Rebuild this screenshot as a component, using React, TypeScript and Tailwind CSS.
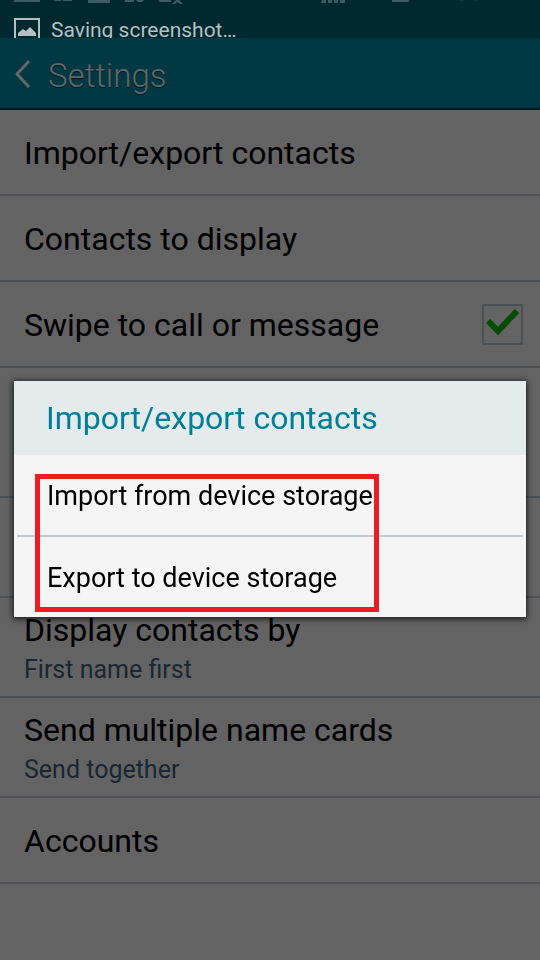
import type { ReactNode } from "react";

const font = "font-['Roboto','Noto_Sans',sans-serif]";

function StatusBar() {
  return (
    <div className="relative flex h-[38px] items-end overflow-hidden bg-[#00282f] pl-3.5">
      <svg
        className="absolute top-0 left-0 h-[4px] w-[540px]"
        viewBox="0 0 540 4"
        fill="#3f5a60"
        aria-hidden="true"
      >
        <path d="M14 0h26v2H14zM54 0h7v1h-7zM63 0h9v1h-9zM88 0h22v3H88zM125 0h9v2h-9zM136 0h8l-2 2h-4zM159 0h12v2h-12zM172 4l4-4h3l4 4h-3l-3-2-2 2z" />
        <path d="M322 0h4v3h-5zM328 0h4v3h-4zM334 0h4v3h-4zM340 0h5v3h-5zM392 0h17v2h-17z" />
        <path d="M460 0h3v1h-3zM474 0h3v1h-3z" opacity=".4" />
      </svg>
      <div className="flex h-5 items-start gap-[11px]">
        <svg className="h-5 w-[26px]" viewBox="0 0 26 20" aria-hidden="true">
          <path d="M1 24V1h24v23" fill="none" stroke="#b3c1c4" strokeWidth="2" />
          <path d="M4 18v-3l5-4 3 2 4-4 6 6v3z" fill="#b3c1c4" />
        </svg>
        <span className="text-[21px] leading-6 text-[#b3c1c4]">
          Saving screenshot…
        </span>
      </div>
    </div>
  );
}

function Header() {
  return (
    <header className="flex h-[72px] items-center gap-4 border-b-2 border-[#00171e] bg-[#003944] pl-3.5 text-[#666666]">
      <button type="button" aria-label="Back">
        <svg className="h-[30px] w-[18px]" viewBox="0 0 18 30" aria-hidden="true">
          <path d="M15 3 3 16l12 13" fill="none" stroke="#666666" strokeWidth="3" />
        </svg>
      </button>
      <h1 className="pt-1.5 text-[33px] leading-10 font-light [text-shadow:0_1px_1px_#00171e]">
        Settings
      </h1>
    </header>
  );
}

type RowProps = {
  title: string;
  summary?: string;
  children?: ReactNode;
};

function Row({ title, summary, children }: RowProps) {
  return (
    <li
      className={`flex items-center justify-between border-b-2 border-[#4b5055] pr-[17px] pl-6 ${
        summary ? "h-[100px]" : "h-[86px]"
      }`}
    >
      <button type="button" className="pt-0.5 text-left">
        <span className="block text-[32px] leading-11 text-black">{title}</span>
        {summary && (
          <span className="block text-[25px] leading-9 text-[#1a2631]">{summary}</span>
        )}
      </button>
      {children}
    </li>
  );
}

function SwipeCheckbox() {
  return (
    <label className="relative size-[41px]">
      <input
        type="checkbox"
        defaultChecked
        aria-label="Swipe to call or message"
        className="peer block size-full appearance-none border-2 border-[#4b5055]"
      />
      <svg
        className="pointer-events-none absolute inset-0 hidden size-full peer-checked:block"
        viewBox="0 0 41 41"
        aria-hidden="true"
      >
        <path d="m6 17 10 10L35 7" fill="none" stroke="#064b02" strokeWidth="6" />
      </svg>
    </label>
  );
}

function ImportExportDialog() {
  return (
    <div className="fixed inset-0 flex items-center justify-center px-3.5 pt-[38px]">
      <div
        role="dialog"
        aria-labelledby="dialog-title"
        className="relative w-full bg-[#f5f5f5] shadow-[0_1px_6px_1px_rgba(0,0,0,0.75)]"
      >
        <h2
          id="dialog-title"
          className="flex h-[74px] items-center bg-[#e3ebed] px-8 text-[32px] text-[#007f97]"
        >
          Import/export contacts
        </h2>
        <div className="px-[3px] text-[27px] text-black">
          <button
            type="button"
            className="block h-[82px] w-full border-b-2 border-[#bdc9d2] px-[30px] pt-0.5 text-left"
          >
            Import from device storage
          </button>
          <button type="button" className="block h-20 w-full px-[30px] pt-0.5 text-left">
            Export to device storage
          </button>
        </div>
        <div className="pointer-events-none absolute top-[93px] bottom-[5px] left-[21px] w-[344px] border-5 border-[#ed1c24]" />
      </div>
    </div>
  );
}

export default function App() {
  return (
    <div className={`min-h-screen bg-[#636363] ${font}`}>
      <StatusBar />
      <Header />
      <ul>
        <Row title="Import/export contacts" />
        <Row title="Contacts to display" />
        <Row title="Swipe to call or message">
          <SwipeCheckbox />
        </Row>
        <li className="h-[130px] border-b-2 border-[#4b5055]" />
        <li className="h-[100px] border-b-2 border-[#4b5055]" />
        <Row title="Display contacts by" summary="First name first" />
        <Row title="Send multiple name cards" summary="Send together" />
        <Row title="Accounts" />
      </ul>
      <ImportExportDialog />
    </div>
  );
}
